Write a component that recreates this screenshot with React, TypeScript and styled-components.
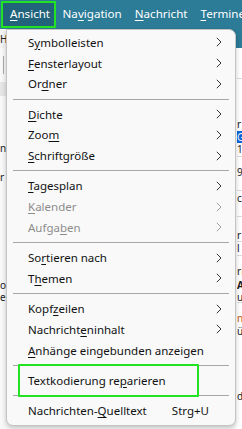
import React from "react"
import styled, { createGlobalStyle } from "styled-components"

const GlobalStyle = createGlobalStyle`
    html, body {
        margin: 0;
        padding: 0;
        overflow: hidden;
        background: #ffffff;
    }
    body {
        font-family: "Noto Sans", "Open Sans", sans-serif;
    }
`

const Window = styled.div`
    position: relative;
    width: 242px;
    height: 429px;
    overflow: hidden;
    background: #ffffff;
    display: flex;
    flex-direction: column;
`

const MenuBar = styled.div`
    height: 29px;
    flex-shrink: 0;
    background-color: #2c7b97;
    display: flex;
    flex-direction: row;
    align-items: stretch;
    padding: 1px 0 1px 1px;
    box-sizing: border-box;
    overflow: hidden;
`

const MenuBarItem = styled.div<{ $active?: boolean }>`
    display: flex;
    align-items: center;
    padding: ${(p) => (p.$active ? "0 6px 2px 9px" : "0 6.5px 2px")};
    color: #ffffff;
    font-size: 11.6px;
    white-space: nowrap;
    background-color: ${(p) => (p.$active ? "#22637c" : "transparent")};
    outline: ${(p) => (p.$active ? "2px solid #22e322" : "none")};
    outline-offset: -2px;

    u {
        text-decoration-thickness: 1px;
        text-underline-offset: 2px;
    }
`

const TabStrip = styled.div`
    height: 19px;
    flex-shrink: 0;
    display: flex;
    background-color: #2c7b97;
`

const Tab = styled.div`
    width: 120px;
    background: #f3f3f3;
    font-size: 10px;
    line-height: 12px;
    color: #222;
    display: flex;
    align-items: center;
    overflow: hidden;
`

const Content = styled.div`
    flex: 1;
    display: flex;
    flex-direction: row;
`

const FolderPane = styled.div`
    width: 236px;
    flex-shrink: 0;
    display: flex;
    flex-direction: column;
    background: #f8f8f8;
    font-size: 10px;
    line-height: 11px;
    color: #222;
`

const FolderSearch = styled.div`
    margin: 8px 0 0 3px;
    height: 18px;
    border-left: 1px solid #a9a9a9;
`

const FolderHeader = styled.div`
    margin-top: 8px;
    height: 14px;
    background: #e6e6e6;
`

const ListPane = styled.div`
    flex: 1;
    display: flex;
    flex-direction: column;
    background: #ffffff;
    font-size: 10px;
    line-height: 11px;
    color: #1b1b1b;
    padding-left: 1px;
`

const PaneRow = styled.div<{ $h: number; $line?: boolean; $sel?: boolean; $color?: string; $bold?: boolean }>`
    height: ${(p) => p.$h}px;
    flex-shrink: 0;
    display: flex;
    align-items: center;
    white-space: nowrap;
    overflow: hidden;
    box-sizing: border-box;
    border-bottom: ${(p) => (p.$line ? "1px solid #dcdcdc" : "none")};
    background: ${(p) => (p.$sel ? "#0a64d8" : "transparent")};
    color: ${(p) => (p.$sel ? "#ffffff" : p.$color || "#1b1b1b")};
    font-weight: ${(p) => (p.$bold ? 700 : 400)};
`

const Menu = styled.div`
    position: absolute;
    left: 6px;
    top: 29px;
    width: 230px;
    box-sizing: border-box;
    background: #f9f9f9;
    border: 1px solid #c4c4c4;
    border-radius: 0 7px 7px 7px;
    box-shadow: 0 2px 5px rgba(0, 0, 0, 0.22);
    padding: 2px 0 3.6px 0;
    display: flex;
    flex-direction: column;
    font-size: 11.5px;
`

const MenuRow = styled.div<{ $disabled?: boolean }>`
    height: 20.75px;
    display: flex;
    flex-direction: row;
    align-items: center;
    padding: 0 13px 0 21px;
    color: ${(p) => (p.$disabled ? "#8d8d8d" : "#111111")};
    white-space: nowrap;

    u {
        text-decoration-thickness: 1px;
        text-underline-offset: 2px;
    }
`

const MenuLabel = styled.span`
    flex: 1;
`

const Shortcut = styled.span`
    margin-right: 13px;
`

const Separator = styled.div`
    height: 1px;
    margin: 4.25px 6px;
    background: #a6a6a6;
`

const Highlight = styled.div`
    position: absolute;
    left: 11px;
    top: 334px;
    width: 181px;
    height: 33px;
    box-sizing: border-box;
    border: 2px solid #22e322;
    border-radius: 1px;
    pointer-events: none;
`

const Chevron = ({ disabled }: { disabled?: boolean }) => (
    <svg width="6" height="10" viewBox="0 0 6 10">
        <polyline points="0.8,0.8 5,5 0.8,9.2" fill="none" stroke={disabled ? "#a0a0a0" : "#333333"} strokeWidth="1" />
    </svg>
)

type Item = { pre: string; key: string; post: string; sub?: boolean; disabled?: boolean; shortcut?: string }

const groups: Item[][] = [
    [
        { pre: "S", key: "y", post: "mbolleisten", sub: true },
        { pre: "", key: "F", post: "ensterlayout", sub: true },
        { pre: "Or", key: "d", post: "ner", sub: true },
    ],
    [
        { pre: "", key: "D", post: "ichte", sub: true },
        { pre: "Zoo", key: "m", post: "", sub: true },
        { pre: "", key: "S", post: "chriftgröße", sub: true },
    ],
    [
        { pre: "", key: "T", post: "agesplan", sub: true },
        { pre: "", key: "K", post: "alender", sub: true, disabled: true },
        { pre: "Aufga", key: "b", post: "en", sub: true, disabled: true },
    ],
    [
        { pre: "So", key: "r", post: "tieren nach", sub: true },
        { pre: "T", key: "h", post: "emen", sub: true },
    ],
    [
        { pre: "Kopf", key: "z", post: "eilen", sub: true },
        { pre: "Nachricht", key: "e", post: "ninhalt", sub: true },
        { pre: "", key: "A", post: "nhänge eingebunden anzeigen" },
    ],
    [{ pre: "Textkodierung re", key: "p", post: "arieren" }],
    [{ pre: "Nachrichten-", key: "Q", post: "uelltext", shortcut: "Strg+U" }],
]

const listRows = [
    { h: 31, line: true },
    { h: 38 },
    { h: 14, t: "r" },
    { h: 12, t: "G", sel: true },
    { h: 14, t: "1", line: true },
    { h: 8 },
    { h: 15, t: "9" },
    { h: 11, line: true },
    { h: 14, t: "c" },
    { h: 12, line: true },
    { h: 12 },
    { h: 13, t: "r", line: true },
    { h: 14, t: "l", line: true },
    { h: 8 },
    { h: 14, t: "ri" },
    { h: 14, t: "A", bold: true },
    { h: 11, t: "u", line: true },
    { h: 9 },
    { h: 13, t: "n", color: "#c2570b" },
    { h: 12, t: "ü" },
    { h: 52 },
    { h: 14, t: "d" },
]

const App = (): JSX.Element => {
    return (
        <>
            <GlobalStyle />
            <Window>
                <MenuBar>
                    <MenuBarItem $active>
                        <span><u>A</u>nsicht</span>
                    </MenuBarItem>
                    <MenuBarItem>
                        <span>Na<u>v</u>igation</span>
                    </MenuBarItem>
                    <MenuBarItem>
                        <span><u>N</u>achricht</span>
                    </MenuBarItem>
                    <MenuBarItem>
                        <span><u>T</u>ermine</span>
                    </MenuBarItem>
                </MenuBar>
                <TabStrip>
                    <Tab>H</Tab>
                </TabStrip>
                <Content>
                    <FolderPane>
                        <FolderSearch />
                        <FolderHeader />
                        <PaneRow $h={44} />
                        <PaneRow $h={16}>n</PaneRow>
                        <PaneRow $h={13} />
                        <PaneRow $h={16}>r</PaneRow>
                        <PaneRow $h={94} />
                        <PaneRow $h={12}>o</PaneRow>
                        <PaneRow $h={12}>e</PaneRow>
                    </FolderPane>
                    <ListPane>
                        {listRows.map((r, i) => (
                            <PaneRow key={i} $h={r.h} $line={r.line} $sel={r.sel} $color={r.color} $bold={r.bold}>
                                {r.t}
                            </PaneRow>
                        ))}
                    </ListPane>
                </Content>
                <Menu>
                    {groups.map((g, gi) => (
                        <React.Fragment key={gi}>
                            {gi > 0 && <Separator />}
                            {g.map((it) => (
                                <MenuRow key={it.pre + it.key} $disabled={it.disabled}>
                                    <MenuLabel>
                                        {it.pre}
                                        <u>{it.key}</u>
                                        {it.post}
                                    </MenuLabel>
                                    {it.shortcut && <Shortcut>{it.shortcut}</Shortcut>}
                                    {it.sub && <Chevron disabled={it.disabled} />}
                                </MenuRow>
                            ))}
                        </React.Fragment>
                    ))}
                    <Highlight />
                </Menu>
            </Window>
        </>
    )
}

export default App
